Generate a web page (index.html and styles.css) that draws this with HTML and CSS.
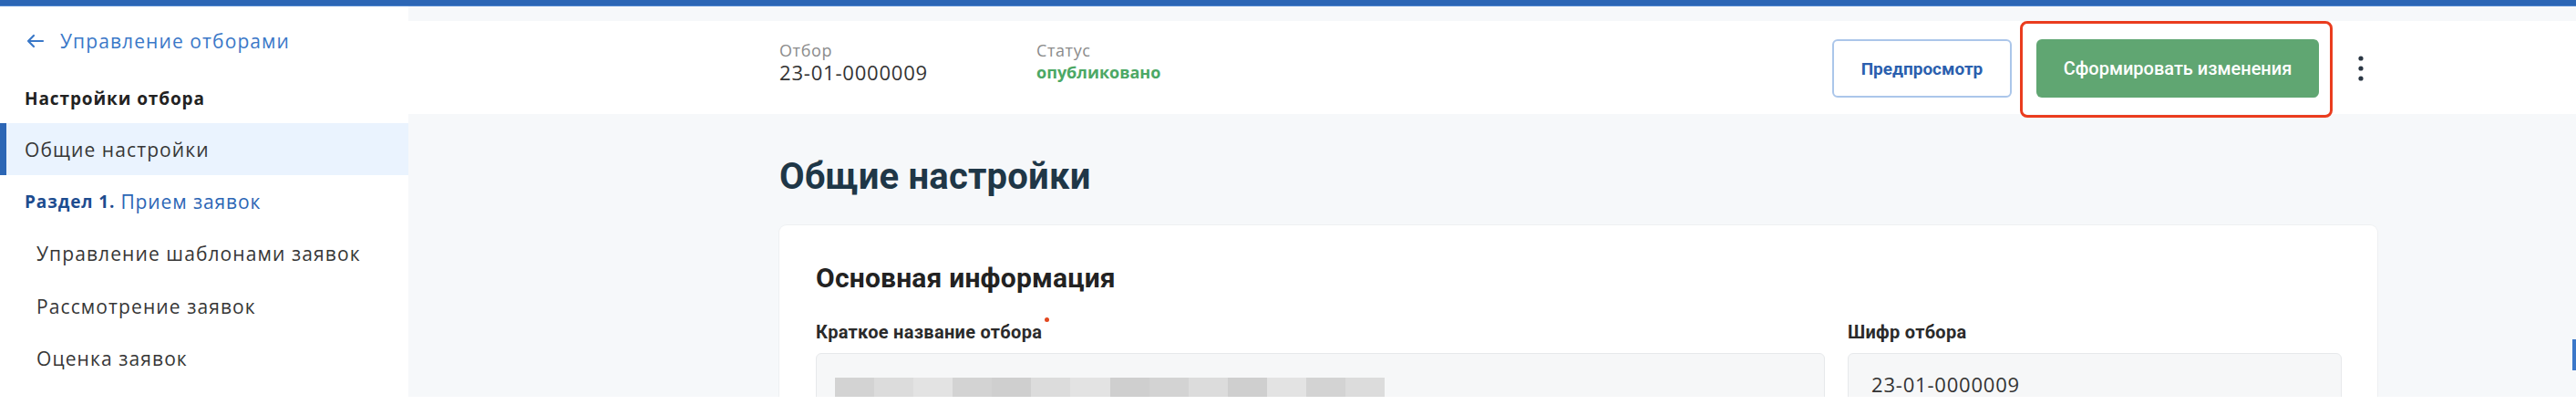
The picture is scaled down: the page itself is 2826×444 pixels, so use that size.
FILE: index.html
```html
<!DOCTYPE html>
<html lang="ru">
<head>
<meta charset="utf-8">
<title>Общие настройки</title>
<link rel="stylesheet" href="styles.css">
</head>
<body>
<div class="page">
  <div class="topbar"></div>
  <div class="app">
    <aside class="sidebar">
      <a class="back" href="#">
        <svg class="back-icon" width="20" height="16" viewBox="0 0 20 16"><path d="M18 8H2M8 2L2 8l6 6" fill="none" stroke="#3a78c8" stroke-width="2.2" stroke-linecap="round" stroke-linejoin="round"/></svg>
        <span>Управление отборами</span>
      </a>
      <div class="side-title">Настройки отбора</div>
      <div class="side-item active">Общие настройки</div>
      <div class="side-item section"><b>Раздел 1.</b> Прием заявок</div>
      <div class="side-item sub">Управление шаблонами заявок</div>
      <div class="side-item sub">Рассмотрение заявок</div>
      <div class="side-item sub">Оценка заявок</div>
    </aside>
    <main class="main">
      <header class="header">
        <div class="info">
          <div class="info-label">Отбор</div>
          <div class="info-value">23-01-0000009</div>
        </div>
        <div class="info">
          <div class="info-label">Статус</div>
          <div class="info-value status">опубликовано</div>
        </div>
        <div class="actions">
          <button class="btn btn-outline">Предпросмотр</button>
          <div class="highlight-wrap">
            <button class="btn btn-green">Сформировать изменения</button>
            <div class="highlight"></div>
          </div>
          <button class="kebab" aria-label="Ещё">
            <svg width="8" height="30" viewBox="0 0 8 30"><circle cx="4" cy="4" r="2.6" fill="#2b3744"/><circle cx="4" cy="15" r="2.6" fill="#2b3744"/><circle cx="4" cy="26" r="2.6" fill="#2b3744"/></svg>
          </button>
        </div>
      </header>
      <section class="content">
        <h1 class="page-title">Общие настройки</h1>
        <div class="card">
          <h2 class="card-title">Основная информация</h2>
          <div class="fields">
            <div class="field">
              <div class="field-label">Краткое название отбора<span class="req"></span></div>
              <div class="input">
                <div class="redacted">
                  <span class="r1"></span><span class="r2"></span><span class="r3"></span><span class="r1"></span><span class="r4"></span><span class="r2"></span><span class="r3"></span><span class="r4"></span><span class="r1"></span><span class="r2"></span><span class="r4"></span><span class="r3"></span><span class="r1"></span><span class="r2"></span>
                </div>
              </div>
            </div>
            <div class="field">
              <div class="field-label">Шифр отбора</div>
              <div class="input"><span class="input-value">23-01-0000009</span></div>
            </div>
          </div>
        </div>
      </section>
      <div class="side-tab"></div>
    </main>
  </div>
</div>
</body>
</html>
```

FILE: styles.css
```css
* { box-sizing: border-box; }

html, body {
  margin: 0;
  padding: 0;
  background: #ffffff;
  width: 2826px;
  height: 444px;
  overflow: hidden;
}

.page {
  height: 435px;
  display: flex;
  flex-direction: column;
  overflow: hidden;
}

.topbar {
  height: 7px;
  flex: 0 0 7px;
  background: #2c66b5;
  border-bottom: 1px solid #4f86cf;
}

.app {
  flex: 1;
  display: flex;
  min-height: 0;
}

/* ---------- Sidebar ---------- */
.sidebar {
  width: 448px;
  flex: 0 0 448px;
  background: #ffffff;
  font-family: "Open Sans", "Noto Sans", sans-serif;
  font-size: 21px;
  font-weight: 500;
  letter-spacing: 1.1px;
  color: #363636;
  padding-top: 14px;
}

.back {
  display: flex;
  align-items: center;
  height: 48px;
  padding-left: 29px;
  gap: 17px;
  color: #3a78c8;
  text-decoration: none;
  font-weight: 400;
}

.side-title {
  margin-top: 11px;
  height: 55px;
  display: flex;
  align-items: center;
  padding-left: 27px;
  font-weight: 700;
  font-size: 19px;
  letter-spacing: 0.9px;
  color: #222;
}

.side-item {
  height: 57.5px;
  display: flex;
  align-items: center;
  padding-left: 27px;
}

.side-item.active {
  height: 57px;
  background: #eaf3fe;
  border-left: 7px solid #2c66b5;
  padding-left: 20px;
}

.side-item.section {
  color: #2c66b5;
  gap: 6px;
  font-weight: 400;
  letter-spacing: 0.9px;
}

.side-item.section b {
  color: #1d4c8f;
  font-weight: 700;
  font-size: 19px;
  letter-spacing: 0.9px;
}

.side-item.sub {
  padding-left: 40px;
}

/* ---------- Main ---------- */
.main {
  flex: 1;
  position: relative;
  background: #f6f8fa;
  padding-top: 16px;
  display: flex;
  flex-direction: column;
  min-width: 0;
}

.header {
  height: 102px;
  flex: 0 0 102px;
  background: #ffffff;
  display: flex;
  align-items: flex-start;
  padding: 0 218px 0 407px;
  font-family: "Open Sans", "Noto Sans", sans-serif;
}

.info {
  width: 282px;
  padding-top: 21px;
}

.info-label {
  font-size: 18px;
  line-height: 22px;
  color: #8b8b8b;
  letter-spacing: 0.6px;
}

.info-value {
  font-size: 22px;
  line-height: 26px;
  color: #333;
  letter-spacing: 0.8px;
}

.info-value.status {
  color: #4ca865;
  font-weight: 700;
  font-size: 18px;
  letter-spacing: 0;
}

.actions {
  margin-left: auto;
  display: flex;
  align-items: center;
  height: 100%;
  gap: 27px;
  padding-top: 2px;
}

.btn {
  height: 64px;
  border-radius: 6px;
  font-family: "Roboto", "Noto Sans", sans-serif;
  font-size: 19px;
  font-weight: 700;
  cursor: pointer;
}

.btn-outline {
  width: 197px;
  background: #ffffff;
  border: 2px solid #abc6ea;
  color: #2b5fae;
}

.btn-green {
  width: 310px;
  background: #60a672;
  border: none;
  color: #ffffff;
  font-weight: 500;
  font-size: 20px;
}

.highlight-wrap {
  position: relative;
  display: flex;
}

.highlight {
  position: absolute;
  top: -20px;
  left: -18px;
  right: -15px;
  bottom: -22px;
  border: 3px solid #ea3c1e;
  border-radius: 8px;
  pointer-events: none;
}

.kebab {
  width: 36px;
  height: 40px;
  margin-left: 1px;
  border: none;
  background: transparent;
  display: flex;
  align-items: center;
  justify-content: center;
  padding: 0;
}

.content {
  padding: 45px 218px 0 407px;
  font-family: "Roboto", "Noto Sans", sans-serif;
}

.page-title {
  margin: 0;
  font-size: 40px;
  line-height: 48px;
  font-weight: 700;
  color: #1f3747;
  letter-spacing: 0.2px;
}

.card {
  margin-top: 29px;
  background: #ffffff;
  border-radius: 8px;
  box-shadow: 0 0 0 1px #eef0f2;
  padding: 40px 39px 0 40px;
  height: 300px;
}

.card-title {
  margin: 0;
  font-size: 30px;
  line-height: 36px;
  font-weight: 700;
  color: #222;
  letter-spacing: 0.2px;
}

.fields {
  margin-top: 29px;
  display: grid;
  grid-template-columns: 1107px 542px;
  column-gap: 25px;
}

.field-label {
  font-size: 20px;
  line-height: 24px;
  font-weight: 700;
  color: #2a2a2a;
  letter-spacing: 0.3px;
  position: relative;
  display: inline-block;
}

.req {
  position: absolute;
  right: -8px;
  top: -4px;
  width: 5px;
  height: 5px;
  border-radius: 50%;
  background: #e2471f;
}

.input {
  margin-top: 11px;
  height: 64px;
  background: #f6f7f8;
  border: 1px solid #e7e9eb;
  border-radius: 6px;
  padding: 20px 27px 0 20px;
  display: flex;
  align-items: flex-start;
}

.input-value {
  font-family: "Open Sans", "Noto Sans", sans-serif;
  font-size: 22px;
  line-height: 26px;
  color: #333;
  letter-spacing: 0.8px;
  margin-left: 5px;
}

.redacted {
  display: flex;
  height: 22px;
  width: 603px;
  margin-top: 6px;
}

.redacted span { flex: 1; height: 100%; }
.redacted .r1 { background: #d3d3d3; }
.redacted .r2 { background: #dcdcdc; }
.redacted .r3 { background: #e3e3e3; }
.redacted .r4 { background: #cfcfcf; }

.side-tab {
  position: absolute;
  right: 0;
  top: 365px;
  width: 4px;
  height: 34px;
  background: #3b78c9;
}
```
